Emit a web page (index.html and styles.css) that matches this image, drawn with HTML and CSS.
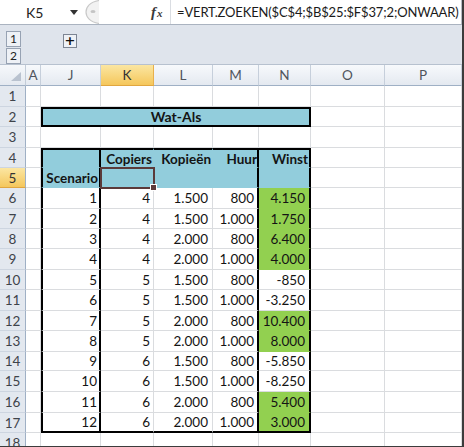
FILE: index.html
```html
<!DOCTYPE html>
<html>
<head>
<meta charset="utf-8">
<link rel="stylesheet" href="styles.css">
</head>
<body>
<div class="app">
  <div class="fbar">
    <div class="namebox"><span class="ref">K5</span><svg class="dd" width="8" height="5" viewBox="0 0 8 5"><path d="M0 0H8L4 5Z" fill="#333"/></svg></div>
    <svg class="grip" width="16" height="24" viewBox="0 0 16 24"><path d="M15 0.5C6 2 2 7 2 12C2 17 6 22 15 23.5" fill="#f2f2f2" stroke="#c9c9c9" stroke-width="1.2"/><ellipse cx="9" cy="11.5" rx="2.5" ry="1.5" fill="#c4c4c4"/></svg>
    <div class="fxbox"><span class="fx"><i>f</i><i class="fxx">x</i></span></div>
    <div class="formula">=VERT.ZOEKEN($C$4;$B$25:$F$37;2;ONWAAR)</div>
  </div>
  <div class="outline">
    <div class="levels"><span class="lvl">1</span><span class="lvl lvl2">2</span></div>
    <span class="expand">+</span>
  </div>
  <div class="sheet">
    <div class="row hdr">
      <div class="corner"><span class="tri"></span></div>
      <div class="ch">A</div><div class="ch">J</div><div class="ch chsel">K</div><div class="ch">L</div><div class="ch">M</div><div class="ch">N</div><div class="ch">O</div><div class="ch">P</div>
    </div>
    <div class="row r21"><div class="rh">1</div><div class="c"></div><div class="c"></div><div class="c"></div><div class="c"></div><div class="c"></div><div class="c"></div><div class="c"></div><div class="c"></div></div>
    <div class="row r20"><div class="rh">2</div><div class="c"></div><div class="c wat">Wat-Als</div><div class="c"></div><div class="c"></div></div>
    <div class="row r21"><div class="rh">3</div><div class="c"></div><div class="c"></div><div class="c"></div><div class="c"></div><div class="c"></div><div class="c"></div><div class="c"></div><div class="c"></div></div>
    <div class="row r20"><div class="rh">4</div><div class="c"></div><div class="c hb tl tr tt"></div><div class="c hb tt hp">Copiers</div><div class="c hb tt hp">Kopieën</div><div class="c hb tt tr hp0">Huur</div><div class="c hb tt tr hp">Winst</div><div class="c"></div><div class="c"></div></div>
    <div class="row r20"><div class="rh rhsel">5</div><div class="c"></div><div class="c hb tl tr hp low">Scenario</div><div class="c hb active"><span class="selbox"></span><span class="handle"></span></div><div class="c hb"></div><div class="c hb tr"></div><div class="c hb tr"></div><div class="c"></div><div class="c"></div></div>
    <div class="row r21"><div class="rh">6</div><div class="c"></div><div class="c tl tr pj">1</div><div class="c pk">4</div><div class="c pl">1.500</div><div class="c tr pm">800</div><div class="c g tr pn">4.150</div><div class="c"></div><div class="c"></div></div>
    <div class="row r20"><div class="rh">7</div><div class="c"></div><div class="c tl tr pj">2</div><div class="c pk">4</div><div class="c pl">1.500</div><div class="c tr pm">1.000</div><div class="c g tr pn">1.750</div><div class="c"></div><div class="c"></div></div>
    <div class="row r20"><div class="rh">8</div><div class="c"></div><div class="c tl tr pj">3</div><div class="c pk">4</div><div class="c pl">2.000</div><div class="c tr pm">800</div><div class="c g tr pn">6.400</div><div class="c"></div><div class="c"></div></div>
    <div class="row r21"><div class="rh">9</div><div class="c"></div><div class="c tl tr pj">4</div><div class="c pk">4</div><div class="c pl">2.000</div><div class="c tr pm">1.000</div><div class="c g tr pn">4.000</div><div class="c"></div><div class="c"></div></div>
    <div class="row r20"><div class="rh">10</div><div class="c"></div><div class="c tl tr pj">5</div><div class="c pk">5</div><div class="c pl">1.500</div><div class="c tr pm">800</div><div class="c tr pn">-850</div><div class="c"></div><div class="c"></div></div>
    <div class="row r21"><div class="rh">11</div><div class="c"></div><div class="c tl tr pj">6</div><div class="c pk">5</div><div class="c pl">1.500</div><div class="c tr pm">1.000</div><div class="c tr pn">-3.250</div><div class="c"></div><div class="c"></div></div>
    <div class="row r20"><div class="rh">12</div><div class="c"></div><div class="c tl tr pj">7</div><div class="c pk">5</div><div class="c pl">2.000</div><div class="c tr pm">800</div><div class="c g tr pn">10.400</div><div class="c"></div><div class="c"></div></div>
    <div class="row r21"><div class="rh">13</div><div class="c"></div><div class="c tl tr pj">8</div><div class="c pk">5</div><div class="c pl">2.000</div><div class="c tr pm">1.000</div><div class="c g tr pn">8.000</div><div class="c"></div><div class="c"></div></div>
    <div class="row r19"><div class="rh">14</div><div class="c"></div><div class="c tl tr pj">9</div><div class="c pk">6</div><div class="c pl">1.500</div><div class="c tr pm">800</div><div class="c tr pn">-5.850</div><div class="c"></div><div class="c"></div></div>
    <div class="row r21"><div class="rh">15</div><div class="c"></div><div class="c tl tr pj">10</div><div class="c pk">6</div><div class="c pl">1.500</div><div class="c tr pm">1.000</div><div class="c tr pn">-8.250</div><div class="c"></div><div class="c"></div></div>
    <div class="row r21"><div class="rh">16</div><div class="c"></div><div class="c tl tr pj">11</div><div class="c pk">6</div><div class="c pl">2.000</div><div class="c tr pm">800</div><div class="c g tr pn">5.400</div><div class="c"></div><div class="c"></div></div>
    <div class="row r20"><div class="rh">17</div><div class="c"></div><div class="c tl tr tb pj">12</div><div class="c tb pk">6</div><div class="c tb pl">2.000</div><div class="c tr tb pm">1.000</div><div class="c g tr tb pn">3.000</div><div class="c"></div><div class="c"></div></div>
    <div class="row r21"><div class="rh">18</div><div class="c"></div><div class="c"></div><div class="c"></div><div class="c"></div><div class="c"></div><div class="c"></div><div class="c"></div><div class="c"></div></div>
  </div>
</div>
</body>
</html>
```
FILE: styles.css
```css
html, body { margin: 0; padding: 0; }
body {
  width: 464px; height: 447px; overflow: hidden; background: #fff;
  font-family: Lato, "Liberation Sans", sans-serif; color: #1a1a1a;
}
.app {
  width: 464px; height: 447px; box-sizing: border-box; overflow: hidden;
  border-right: 2px solid #3c3c3c; border-bottom: 1px solid #3c3c3c;
}

/* formula bar */
.fbar {
  height: 25px; box-sizing: border-box; display: flex;
  border-bottom: 1px solid #aab3c0; background: #fff;
}
.namebox {
  width: 84px; flex: none; box-sizing: border-box; padding-left: 26px; padding-right: 6px;
  display: flex; align-items: center; font-size: 14px; color: #222;
}
.namebox .ref { flex: 1; }
.dd { display: block; margin-top: 1px; }
.grip { display: block; flex: none; }
.fxbox {
  width: 70px; flex: none; box-sizing: border-box; padding-left: 51px;
  display: flex; align-items: center;
}
.fx {
  font-family: "Liberation Serif", serif; font-weight: bold; color: #3a3a3a;
  font-size: 15px; line-height: 1;
}
.fxx { font-size: 11px; margin-left: 1px; }
.formula {
  flex: 1; min-width: 0; box-sizing: border-box; border-left: 1px solid #dadde2; border-right: 1px solid #b6bcc5;
  padding-left: 6px; font-size: 13px; letter-spacing: -0.15px; line-height: 24px; color: #1a1a1a; white-space: nowrap;
}

/* outline bar */
.outline {
  height: 40px; box-sizing: border-box; display: flex;
  background: #dfe4ec; border-bottom: 1px solid #b7c1cf;
}
.levels {
  width: 63px; box-sizing: border-box; padding: 6px 0 0 6px;
  display: flex; flex-direction: column; align-items: flex-start;
}
.lvl {
  width: 15px; height: 16px; box-sizing: border-box;
  border: 1px solid #97a2b3; background: #eef1f6;
  font-size: 12px; line-height: 14px; text-align: center; color: #222;
}
.lvl2 { margin-top: 1px; }
.expand {
  margin-top: 9px; width: 14px; height: 14px; box-sizing: border-box;
  border: 1px solid #7d8593; background: #eef1f6;
  font-family: "DejaVu Sans", sans-serif; font-weight: bold;
  font-size: 13px; line-height: 11px; text-align: center; color: #111;
}

/* sheet grid */
.row {
  display: grid;
  grid-template-columns: 26px 15px 60px 53px 59px 46px 52px 74px 77px;
}
.r19 { height: 19px; }
.r20 { height: 20px; }
.r21 { height: 21px; }
.hdr { height: 21px; }

.corner {
  box-sizing: border-box; position: relative;
  background: linear-gradient(#f6f8fb, #e4e9f0);
  border-right: 1px solid #c3ccd8; border-bottom: 1px solid #9fb0c5;
}
.tri {
  position: absolute; right: 4px; bottom: 4px; width: 0; height: 0;
  border-left: 10px solid transparent; border-bottom: 9px solid #b9c2cf;
}
.ch {
  box-sizing: border-box; background: linear-gradient(#f7f9fc, #e4e9f0);
  border-right: 1px solid #c6cfdb; border-bottom: 1px solid #9fb0c5;
  display: flex; align-items: center; justify-content: center;
  font-size: 13.5px; color: #50555d;
}
.chsel {
  background: linear-gradient(#fbe6a2, #f5c75c);
  border-right-color: #e8b04c; border-bottom-color: #e0a640; color: #333;
}
.rh {
  box-sizing: border-box; background: #e3e8ef;
  border-right: 1px solid #9fb0c5; border-bottom: 1px solid #cdd5e0;
  display: flex; align-items: center; justify-content: center;
  font-size: 13.5px; color: #3e434a;
}
.rhsel {
  background: linear-gradient(#fbe6a2, #f5c75c);
  border-bottom-color: #e0a640; color: #333;
}

.c {
  box-sizing: border-box; min-width: 0; white-space: nowrap; overflow: hidden;
  border-right: 1px solid #dadcdf; border-bottom: 1px solid #dadcdf;
  display: flex; align-items: center; justify-content: flex-end;
  font-size: 13.5px; line-height: 16px; color: #141414;
}
.wat {
  grid-column: span 5; justify-content: center;
  background: #92cddc; border: 2px solid #000; font-weight: bold; font-size: 14px;
}
.hb {
  background: #92cddc; font-weight: bold;
  border-right-color: #92cddc; border-bottom-color: #92cddc;
}
.g { background: #92d050; border-bottom-color: #92d050; }
.tl { border-left: 2px solid #000; }
.tr { border-right: 2px solid #000; }
.tt { border-top: 2px solid #000; }
.tb { border-bottom: 2px solid #000; }

.hp { padding-right: 1px; }
.hp0 { padding-right: 0; }
.low { align-items: flex-end; padding-bottom: 1px; }
.pj { padding-right: 2px; }
.pk { padding-right: 3px; }
.pl { padding-right: 4px; }
.pm { padding-right: 3px; }
.pn { padding-right: 4px; }

.active { position: relative; overflow: visible; }
.selbox {
  position: absolute; left: -1px; top: -1px; right: -2px; bottom: -2px;
  border: 2px solid #5b3a3a;
}
.handle {
  position: absolute; right: -4px; bottom: -4px; width: 5px; height: 5px;
  background: #5b3a3a; border: 1px solid #fff;
}
```
